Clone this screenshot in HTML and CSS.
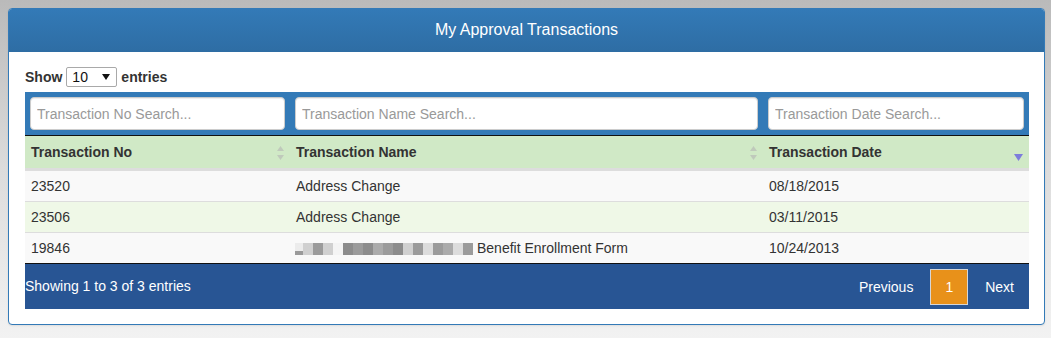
FILE: index.html
```html
<!DOCTYPE html>
<html>
<head>
<meta charset="utf-8">
<link rel="stylesheet" href="styles.css">
</head>
<body>
<div class="panel">
  <div class="panel-heading">My Approval Transactions</div>
  <div class="panel-body">
    <div class="length">
      <span>Show</span>
      <span class="select"><span>10</span><svg width="8" height="6" viewBox="0 0 8 6"><polygon points="0,0 8,0 4,6" fill="#111"/></svg></span>
      <span>entries</span>
    </div>
    <div class="dt">
      <div class="grid filters">
        <div class="fcell"><input class="search" type="text" placeholder="Transaction No Search..."></div>
        <div class="fcell"><input class="search" type="text" placeholder="Transaction Name Search..."></div>
        <div class="fcell"><input class="search" type="text" placeholder="Transaction Date Search..."></div>
      </div>
      <div class="grid thead">
        <div class="th"><span>Transaction No</span><svg class="both" width="7" height="14" viewBox="0 0 7 14"><polygon points="3.5,0 7,5 0,5"/><polygon points="0,9 7,9 3.5,14"/></svg></div>
        <div class="th"><span>Transaction Name</span><svg class="both" width="7" height="14" viewBox="0 0 7 14"><polygon points="3.5,0 7,5 0,5"/><polygon points="0,9 7,9 3.5,14"/></svg></div>
        <div class="th"><span>Transaction Date</span><svg class="desc" width="9" height="7" viewBox="0 0 9 7"><polygon points="0,0 9,0 4.5,7"/></svg></div>
      </div>
      <div class="grid tr odd">
        <div class="td">23520</div>
        <div class="td">Address Change</div>
        <div class="td">08/18/2015</div>
      </div>
      <div class="grid tr even">
        <div class="td">23506</div>
        <div class="td">Address Change</div>
        <div class="td">03/11/2015</div>
      </div>
      <div class="grid tr odd">
        <div class="td">19846</div>
        <div class="td"><span class="mosaic"><i class="m0"></i><i class="m2"></i><i class="m4"></i><i class="m2"></i><i class="m1"></i><i class="m5"></i><i class="m4"></i><i class="m5"></i><i class="m3"></i><i class="m4"></i><i class="m5"></i><i class="m2"></i><i class="m4"></i><i class="m1b"></i><i class="m4"></i><i class="m3"></i><i class="m1b"></i><i class="m4"></i></span>Benefit Enrollment Form</div>
        <div class="td">10/24/2013</div>
      </div>
      <div class="footer">
        <div class="info">Showing 1 to 3 of 3 entries</div>
        <div class="paginate">
          <span class="pbtn">Previous</span>
          <span class="pbtn current">1</span>
          <span class="pbtn">Next</span>
        </div>
      </div>
    </div>
  </div>
</div>
</body>
</html>
```
FILE: styles.css
```css
html, body {
  height: 100%;
}
body {
  margin: 0;
  padding: 8px 6px 0 8px;
  box-sizing: border-box;
  background: linear-gradient(to bottom, #bababa 0%, #dcdcdc 50%, #f2f2f2 100%);
  font-family: "Liberation Sans", Arial, sans-serif;
  font-size: 14px;
  color: #333;
}
.panel {
  border: 1px solid #337ab7;
  border-radius: 4px;
  background: #fff;
  box-shadow: 0 1px 2px rgba(0,0,0,0.08);
  overflow: hidden;
}
.panel-heading {
  height: 43px;
  line-height: 41px;
  text-align: center;
  color: #fff;
  font-size: 16px;
  background: linear-gradient(to bottom, #337ab7 0%, #2e6da4 100%);
}
.panel-body {
  padding: 15px 15px 15px 16px;
}
.length {
  display: flex;
  align-items: center;
  height: 20px;
  margin-bottom: 5px;
  font-weight: bold;
  color: #333;
}
.select {
  display: inline-flex;
  align-items: center;
  justify-content: space-between;
  box-sizing: border-box;
  width: 51px;
  height: 20px;
  margin: 0 4px;
  padding: 0 6px 0 5px;
  border: 1px solid #a9a9a9;
  border-radius: 2px;
  background: #fff;
  font-weight: normal;
  color: #111;
}
.grid {
  display: grid;
  grid-template-columns: 265px 473px 1fr;
}
.filters {
  background: #337ab7;
  border-bottom: 1px solid #111;
}
.fcell {
  padding: 5px;
}
.search {
  display: block;
  box-sizing: border-box;
  width: 100%;
  height: 33px;
  margin: 0;
  padding: 0 6px;
  border: 1px solid #ccc;
  border-radius: 4px;
  background: #fff;
  box-shadow: inset 0 1px 1px rgba(0,0,0,0.075);
  font-family: "Liberation Sans", Arial, sans-serif;
  font-size: 14px;
  color: #555;
  outline: none;
}
.search::placeholder {
  color: #999;
}
.thead {
  background: #d0e9c6;
  border-bottom: 2px solid #ddd;
}
.th {
  display: flex;
  align-items: center;
  justify-content: space-between;
  height: 32px;
  padding: 0 6px 0 6px;
  font-weight: bold;
  color: #333;
}
.th .both {
  fill: #bfc9bb;
  margin-top: 2px;
}
.th .desc {
  fill: #7d7ddc;
  margin-top: 10px;
  margin-right: 0;
}
.tr {
  border-top: 1px solid #ddd;
}
.tr.odd {
  background: #f9f9f9;
}
.tr.even {
  background: #eff8e7;
}
.td {
  display: flex;
  align-items: center;
  height: 30px;
  padding: 0 6px;
  color: #333;
}
.mosaic {
  display: inline-flex;
  height: 12px;
  margin: 1px 4px 0 -1px;
}
.mosaic i {
  display: block;
  width: 10px;
  height: 12px;
}
.mosaic .m0 {
  width: 8px;
  background: linear-gradient(to bottom, #ececec 0%, #ececec 70%, #9a9a9a 70%, #9a9a9a 100%);
}
.mosaic .m1 { background: #f4f4f4; }
.mosaic .m1b { background: #dcdcdc; }
.mosaic .m2 { background: #d0d0d0; }
.mosaic .m3 { background: #ababab; }
.mosaic .m4 { background: #9b9b9b; }
.mosaic .m5 { background: #8c8c8c; }
.footer {
  display: flex;
  align-items: center;
  justify-content: space-between;
  height: 45px;
  background: #285594;
  border-top: 1px solid #111;
  color: #fff;
}
.info {
  margin-top: -2px;
}
.paginate {
  display: flex;
  align-items: center;
}
.pbtn {
  box-sizing: border-box;
  display: block;
  height: 36px;
  line-height: 34px;
  padding: 0 14px;
  margin-left: 2px;
  border: 1px solid transparent;
  color: #fff;
}
.pbtn.current {
  background: #e8911a;
  border-color: #d6d6d6;
}
```
